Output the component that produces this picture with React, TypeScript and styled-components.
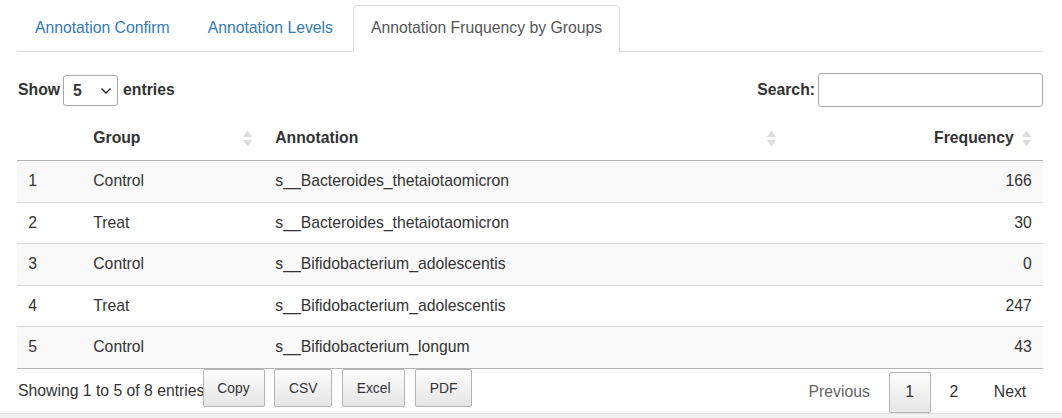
import React from "react";
import styled, { createGlobalStyle, css } from "styled-components";

const Global = createGlobalStyle`
  html, body { margin: 0; padding: 0; background: #fff; overflow: hidden; }
  body {
    font-family: "Liberation Sans", Arial, Helvetica, sans-serif;
    font-size: 15.75px;
    line-height: 22.5px;
    color: #333;
  }
  * { box-sizing: border-box; }
`;

const Page = styled.div`
  padding: 0 19px 0 17px;
`;

const TabList = styled.ul`
  list-style: none;
  margin: 5px 0 0;
  padding: 0;
  display: flex;
  border-bottom: 1px solid #ddd;
`;

const TabItem = styled.li`
  margin: 0 2.25px -1px 0;
`;

const TabLink = styled.a<{ $active?: boolean }>`
  display: block;
  padding: 11.25px 16.875px;
  line-height: 22.5px;
  border: 1px solid transparent;
  border-radius: 4.5px 4.5px 0 0;
  text-decoration: none;
  color: #337ab7;
  cursor: pointer;
  ${(p) =>
    p.$active &&
    css`
      color: #555;
      background: #fff;
      border-color: #ddd #ddd transparent;
    `}
`;

const Controls = styled.div`
  display: flex;
  justify-content: space-between;
  align-items: center;
  margin-top: 21px;
  height: 34px;
`;

const ControlLabel = styled.label`
  display: flex;
  align-items: center;
  font-weight: bold;
  padding-left: 1px;
`;

const SelectWrap = styled.span`
  position: relative;
  display: inline-flex;
  margin: 0 5px 0 3px;
`;

const LengthSelect = styled.select`
  appearance: none;
  width: 55px;
  height: 31px;
  border: 1px solid #aaa;
  border-radius: 3px;
  padding: 0 0 0 9px;
  font-family: inherit;
  font-size: 15.75px;
  font-weight: bold;
  color: #333;
  background: #fff;
`;

const Chevron = styled.svg`
  position: absolute;
  right: 6px;
  top: 12px;
  pointer-events: none;
`;

const SearchInput = styled.input`
  width: 225px;
  height: 34px;
  margin-left: 3px;
  border: 1px solid #aaa;
  border-radius: 3px;
  padding: 5px;
  font-family: inherit;
  font-size: 15.75px;
  background: transparent;
`;

const Table = styled.table`
  width: 100%;
  border-collapse: separate;
  border-spacing: 0;
  table-layout: fixed;
  margin-top: 8px;
  border-bottom: 1px solid #b3b3b3;
`;

const HeadCell = styled.th<{ $align?: "left" | "right"; $sortable?: boolean }>`
  position: relative;
  padding: 11.75px ${(p) => (p.$sortable ? "29.25px" : "11.25px")} 10.75px 11.25px;
  text-align: ${(p) => p.$align || "left"};
  font-weight: bold;
  border-bottom: 1px solid #b3b3b3;
  line-height: 22.5px;
`;

const SortIcon = styled.svg`
  position: absolute;
  right: 12px;
  top: calc(50% - 8px);
`;

const Row = styled.tr<{ $striped?: boolean }>`
  background: ${(p) => (p.$striped ? "#f9f9f9" : "#fff")};
  &:not(:first-child) td {
    border-top: 1px solid #d9d9d9;
  }
`;

const Cell = styled.td<{ $align?: "left" | "right" }>`
  padding: 9px 11.25px;
  line-height: 22.5px;
  text-align: ${(p) => p.$align || "left"};
  white-space: nowrap;
`;

const Footer = styled.div`
  display: flex;
  justify-content: space-between;
  align-items: flex-start;
`;

const FooterLeft = styled.div`
  display: flex;
  align-items: flex-start;
`;

const Info = styled.div`
  padding-top: 11.9px;
  padding-left: 1px;
`;

const ButtonGroup = styled.div`
  display: flex;
  gap: 9.5px;
  margin-top: 0.5px;
  margin-left: -2px;
`;

const ExportButton = styled.button`
  font-family: inherit;
  font-size: 13.86px;
  line-height: 22.2px;
  padding: 6.9px 13.86px;
  border: 1px solid #b3b3b3;
  border-radius: 2px;
  color: #333;
  background: linear-gradient(to bottom, #fdfdfd 0%, #e6e6e6 100%);
  cursor: pointer;
`;

const Paging = styled.div`
  display: flex;
  padding-top: 3.9px;
`;

const PageButton = styled.a<{ $current?: boolean; $disabled?: boolean }>`
  margin-left: 2px;
  padding: 7.875px 15.75px;
  line-height: 22.5px;
  border: 1px solid transparent;
  border-radius: 2px;
  color: ${(p) => (p.$disabled ? "#666" : "#333")};
  cursor: ${(p) => (p.$disabled ? "default" : "pointer")};
  ${(p) =>
    p.$current &&
    css`
      border-color: #b3b3b3;
      background: linear-gradient(to bottom, #fdfdfd 0%, #e6e6e6 100%);
    `}
`;

const BottomBand = styled.div`
  height: 6px;
  border-top: 1px solid #e4e4e4;
  background: #f1f1f1;
`;

const Sort = () => (
  <SortIcon width="9" height="17" viewBox="0 0 9 17">
    <polygon points="0,7 4.5,0.5 9,7" fill="#dcdcdc" />
    <polygon points="0,10 9,10 4.5,16.5" fill="#dcdcdc" />
  </SortIcon>
);

const rows = [
  { id: 1, group: "Control", annotation: "s__Bacteroides_thetaiotaomicron", freq: 166 },
  { id: 2, group: "Treat", annotation: "s__Bacteroides_thetaiotaomicron", freq: 30 },
  { id: 3, group: "Control", annotation: "s__Bifidobacterium_adolescentis", freq: 0 },
  { id: 4, group: "Treat", annotation: "s__Bifidobacterium_adolescentis", freq: 247 },
  { id: 5, group: "Control", annotation: "s__Bifidobacterium_longum", freq: 43 },
];

const tabs = ["Annotation Confirm", "Annotation Levels", "Annotation Fruquency by Groups"];

export default function App() {
  return (
    <>
      <Global />
      <Page>
        <TabList>
          {tabs.map((t, i) => (
            <TabItem key={t}>
              <TabLink $active={i === 2}>{t}</TabLink>
            </TabItem>
          ))}
        </TabList>

        <Controls>
          <ControlLabel>
            Show
            <SelectWrap>
              <LengthSelect defaultValue="5">
                <option value="5">5</option>
                <option value="10">10</option>
                <option value="25">25</option>
              </LengthSelect>
              <Chevron width="12" height="8" viewBox="0 0 12 8">
                <polyline points="1.5,1.5 6,6 10.5,1.5" fill="none" stroke="#222" strokeWidth="1.4" />
              </Chevron>
            </SelectWrap>
            entries
          </ControlLabel>
          <ControlLabel>
            Search:
            <SearchInput type="search" />
          </ControlLabel>
        </Controls>

        <Table>
          <colgroup>
            <col style={{ width: 65 }} />
            <col style={{ width: 182 }} />
            <col style={{ width: 524 }} />
            <col style={{ width: 255 }} />
          </colgroup>
          <thead>
            <tr>
              <HeadCell></HeadCell>
              <HeadCell $sortable>
                Group
                <Sort />
              </HeadCell>
              <HeadCell $sortable>
                Annotation
                <Sort />
              </HeadCell>
              <HeadCell $sortable $align="right">
                Frequency
                <Sort />
              </HeadCell>
            </tr>
          </thead>
          <tbody>
            {rows.map((r, i) => (
              <Row key={r.id} $striped={i % 2 === 0}>
                <Cell>{r.id}</Cell>
                <Cell>{r.group}</Cell>
                <Cell>{r.annotation}</Cell>
                <Cell $align="right">{r.freq}</Cell>
              </Row>
            ))}
          </tbody>
        </Table>

        <Footer>
          <FooterLeft>
            <Info>Showing 1 to 5 of 8 entries</Info>
            <ButtonGroup>
              <ExportButton>Copy</ExportButton>
              <ExportButton>CSV</ExportButton>
              <ExportButton>Excel</ExportButton>
              <ExportButton>PDF</ExportButton>
            </ButtonGroup>
          </FooterLeft>
          <Paging>
            <PageButton $disabled>Previous</PageButton>
            <PageButton $current>1</PageButton>
            <PageButton>2</PageButton>
            <PageButton>Next</PageButton>
          </Paging>
        </Footer>
      </Page>
      <BottomBand />
    </>
  );
}
